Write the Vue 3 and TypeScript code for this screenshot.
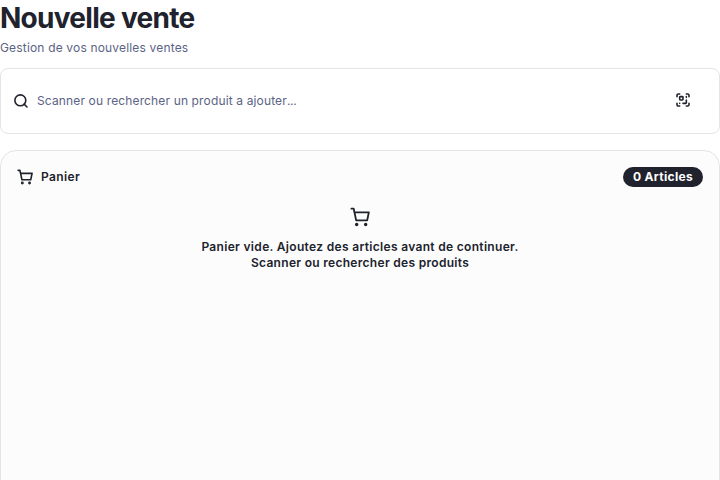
<script setup lang="ts">
const title: string = 'Nouvelle vente'
const count: number = 0
</script>

<template>
  <main class="page">
    <h1 class="title">{{ title }}</h1>
    <p class="subtitle">Gestion de vos nouvelles ventes</p>
    <div class="search">
      <svg class="ic16" viewBox="0 0 24 24"><circle cx="11" cy="11" r="8.2" /><path d="m21 21-4.3-4.3" /></svg>
      <span class="placeholder">Scanner ou rechercher un produit a ajouter<span class="dots">...</span></span>
      <svg class="ic16 scan" viewBox="0 0 24 24"><path d="M17 12v4a1 1 0 0 1-1 1h-4" /><path d="M17 3h2a2 2 0 0 1 2 2v2" /><path d="M17 8V7" /><path d="M21 17v2a2 2 0 0 1-2 2h-2" /><path d="M3 7V5a2 2 0 0 1 2-2h2" /><path d="M7 17h.01" /><path d="M7 21H5a2 2 0 0 1-2-2v-2" /><rect x="7" y="7" width="5" height="5" rx="1" /></svg>
    </div>
    <section class="cart">
      <header class="head">
        <svg class="ic16" viewBox="0 0 24 24"><circle cx="8" cy="21" r="1" /><circle cx="18.8" cy="21" r="1" /><path d="M1.7 2H4.4l3 14.1h13.2L22.6 6.5H5.3" /></svg>
        <span class="label">Panier</span>
        <span class="badge">{{ count }} Articles</span>
      </header>
      <div class="empty">
        <svg class="ic20" viewBox="0 0 24 24"><circle cx="8" cy="21" r="1" /><circle cx="18.8" cy="21" r="1" /><path d="M1.7 2H4.4l3 14.1h13.2L22.6 6.5H5.3" /></svg>
        <p class="m1">Panier vide. Ajoutez des articles avant de continuer.</p>
        <p class="m2">Scanner ou rechercher des produits</p>
      </div>
    </section>
  </main>
</template>

<style>
body { overflow: hidden; background: #fff; }
</style>
<style scoped>
.page { height: 480px; overflow: hidden; font-family: Inter, "Liberation Sans", sans-serif; color: #20222d; box-sizing: border-box; }
svg { fill: none; stroke: currentColor; stroke-width: 2.4; stroke-linecap: round; stroke-linejoin: round; flex: none; }
.ic16 { width: 16px; height: 16px; }
.ic20 { width: 20px; height: 20px; stroke-width: 2.2; }
.title { margin: 0; font-size: 28px; line-height: 37px; font-weight: 700; letter-spacing: -0.72px; }
p { margin: 0; white-space: nowrap; }
.subtitle { margin-top: 3px; font-size: 12px; line-height: 16px; color: #5b6384; letter-spacing: 0.17px; }
.search { box-sizing: border-box; height: 66px; margin-top: 12px; border: 1px solid #e4e4e9; border-radius: 8px; display: flex; align-items: center; padding: 0 28px 0 12px; }
.placeholder { margin-left: 8px; font-size: 12px; line-height: 16px; color: #5b6384; letter-spacing: 0.14px; }
.dots { letter-spacing: -0.3px; }
.scan { margin-left: auto; margin-bottom: 2px; }
.cart { box-sizing: border-box; height: 400px; margin-top: 16px; border: 1px solid #e4e4e9; border-radius: 16px; background: #fcfcfc; padding: 16px; }
.head { display: flex; align-items: center; height: 20px; }
.label { margin-left: 8px; font-size: 12px; line-height: 16px; padding-bottom: 1px; font-weight: 600; letter-spacing: 0.38px; }
.badge { margin-left: auto; box-sizing: border-box; width: 80px; height: 20px; line-height: 20px; border-radius: 10px; background: #20222d; color: #fff; text-align: center; font-size: 12px; font-weight: 700; letter-spacing: 0.3px; }
.empty { margin-top: 20px; display: flex; flex-direction: column; align-items: center; font-size: 12px; line-height: 16px; font-weight: 600; letter-spacing: 0.3px; }
.m1 { margin-top: 12px; letter-spacing: 0.32px; }
</style>
